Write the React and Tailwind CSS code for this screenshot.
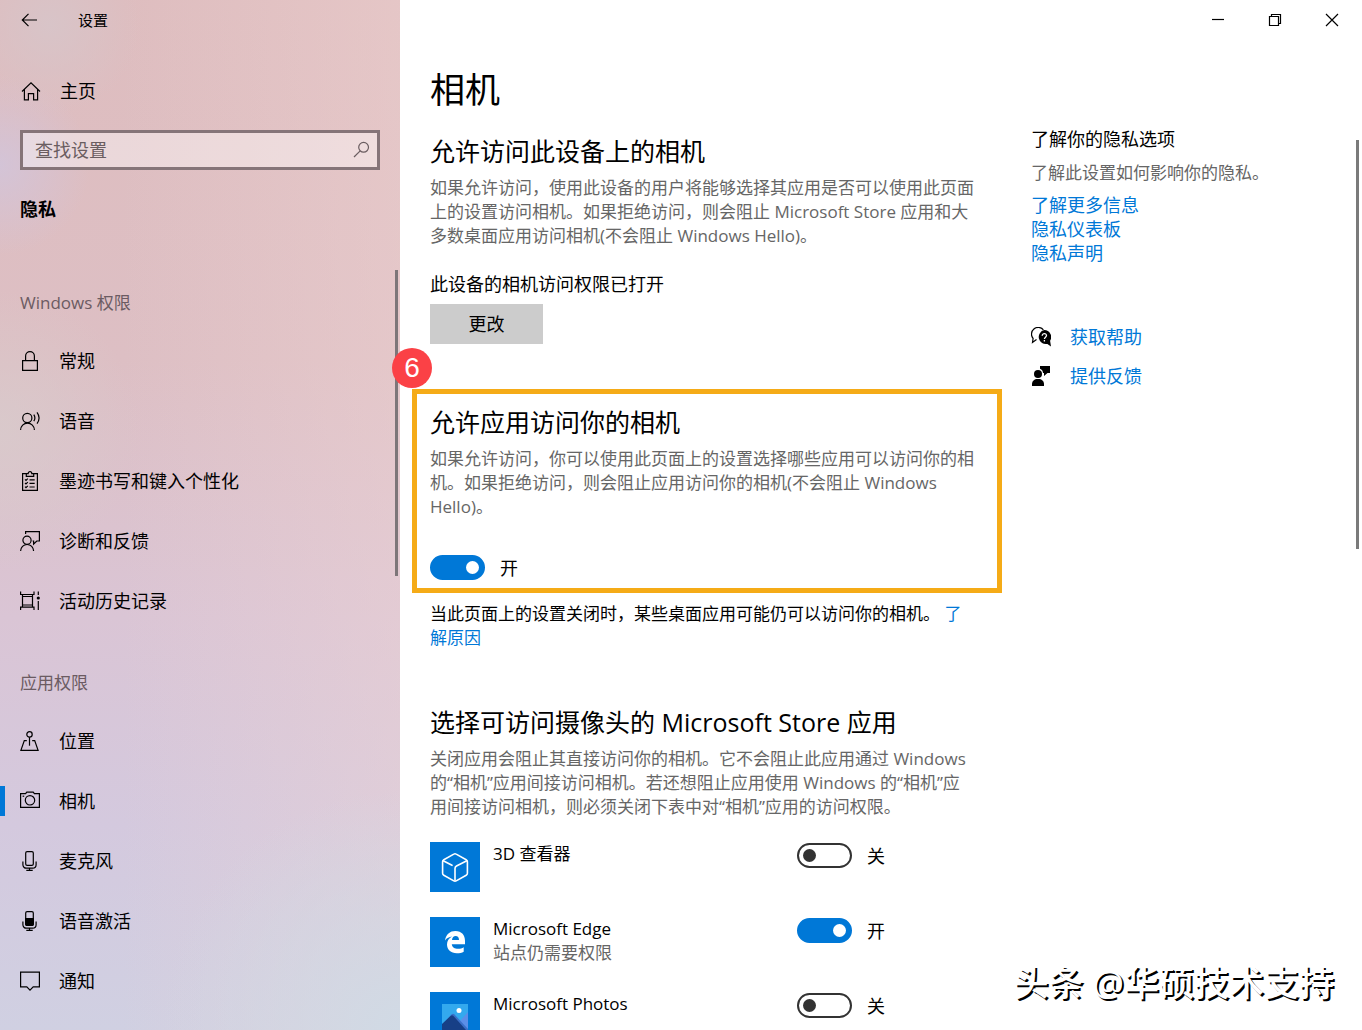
import React, { useState } from 'react';
import clsx from 'clsx';

const Icon = ({ children, className = 'h-5 w-5' }) => (
  <svg
    viewBox="0 0 20 20"
    className={clsx('shrink-0', className)}
    fill="none"
    stroke="currentColor"
    strokeWidth="1.2"
    aria-hidden="true"
  >
    {children}
  </svg>
);

const icons = {
  lock: (
    <>
      <path d="M2.6 9.6h14.8v9.8H2.6z" />
      <path d="M5.6 9.6V5a4.4 4.4 0 0 1 8.8 0v4.6" />
    </>
  ),
  speech: (
    <>
      <circle cx="7.3" cy="7" r="4.6" />
      <path d="M.6 19a6.9 6.9 0 0 1 13.8 0" />
      <path d="M13.8 3.6a6 6 0 0 1 0 6.6M17 1.4a9.4 9.4 0 0 1 0 11.2" />
    </>
  ),
  clipboard: (
    <>
      <path d="M6.3 2.6H2.6v16.8h14.8V2.6h-3.7" />
      <path d="M6.3 2.6h1.9C8.2 1.2 9 .6 10 .6s1.8.6 1.8 2h1.9v2.8H6.3z" />
      <path d="M5 8.4l1 1 1.8-1.8M5 12l1 1 1.8-1.8M5 15.6l1 1 1.8-1.8M9.5 8.8h5.2M9.5 12.4h5.2M9.5 16h5.2" />
    </>
  ),
  feedback: (
    <>
      <circle cx="7" cy="9.2" r="4.1" />
      <path d="M.6 20a6.5 6.5 0 0 1 13 0" />
      <path d="M5.6 3V.6h13.8V10h-2.6l-3.2 3v-3h-1" />
    </>
  ),
  history: (
    <>
      <path d="M2.5 3.5v12.500M12.500 3.500v12.500M.6.600v2.900h13.400V.600M.6 19v-2.900h13.400V19M2.500 5.500h10M2.500 14h10" />
      <path d="M18.300.600v3.400M18.300 10v9" />
      <circle cx="18.300" cy="7" r="1.600" fill="currentColor" stroke="none" />
    </>
  ),
  location: (
    <>
      <circle cx="9.5" cy="3.4" r="2.7" />
      <path d="M9.5 6.1v8.6" />
      <path d="M6.8 9.6H4.3L.9 19.4h17.2L14.7 9.6h-2.5" />
    </>
  ),
  camera: (
    <>
      <path d="M.6 2.6h5l1.2-1.5h6.4l1.2 1.5h5v13.8H.6z" />
      <circle cx="10" cy="9.3" r="4.7" />
      <path d="M2.6 5.2h1.6" />
    </>
  ),
  mic: (
    <>
      <rect x="5.7" y=".6" width="7.6" height="13.8" rx="1.4" />
      <path d="M2.9 10.5v3.3a3.4 3.4 0 0 0 3.4 3.4h6.4a3.4 3.4 0 0 0 3.4-3.4v-3.3M9.5 17.2v2.2M6.3 19.4h6.4" />
    </>
  ),
  micActive: (
    <>
      <rect x="5.7" y=".6" width="7.6" height="13.8" rx="1.4" />
      <path d="M5.7 7.5h7.6v5.7q0 1.2-1.2 1.2H6.9q-1.2 0-1.2-1.2z" fill="currentColor" />
      <path d="M2.9 10.5v3.3a3.4 3.4 0 0 0 3.4 3.4h6.4a3.4 3.4 0 0 0 3.4-3.4v-3.3M9.5 17.2v2.2M6.3 19.4h6.4" />
    </>
  ),
  notification: <path d="M.6 1.1h18.8v14.8h-6.2L10 19.1l-3.2-3.2H.6z" />,
};

const navGroups = [
  {
    title: 'Windows 权限',
    items: [
      { icon: 'lock', label: '常规' },
      { icon: 'speech', label: '语音' },
      { icon: 'clipboard', label: '墨迹书写和键入个性化' },
      { icon: 'feedback', label: '诊断和反馈' },
      { icon: 'history', label: '活动历史记录' },
    ],
  },
  {
    title: '应用权限',
    items: [
      { icon: 'location', label: '位置' },
      { icon: 'camera', label: '相机' },
      { icon: 'mic', label: '麦克风' },
      { icon: 'micActive', label: '语音激活' },
      { icon: 'notification', label: '通知' },
    ],
  },
];

const apps = [
  { id: 'viewer', name: '3D 查看器', enabled: false },
  { id: 'edge', name: 'Microsoft Edge', note: '站点仍需要权限', enabled: true },
  { id: 'photos', name: 'Microsoft Photos', enabled: false },
];

const AppLogo = ({ id }) => (
  <svg viewBox="0 0 50 50" className="h-[50px] w-[50px] shrink-0 bg-[#0078d7]" aria-hidden="true">
    {id === 'viewer' && (
      <g fill="none" stroke="#fff" strokeWidth="1.6" strokeLinejoin="round" strokeLinecap="round">
        <path d="M25 11.7q.6 0 1.2.4l10 5.6q1.2.7 1.2 2v11.6q0 1.3-1.2 2l-10 5.6q-1.2.6-2.4 0l-10-5.6q-1.2-.7-1.2-2V19.7q0-1.3 1.2-2l10-5.6q.6-.4 1.2-.4z" />
        <path d="M13.2 18.8L22 23.3M36.8 18.8L26.5 24Q25 24.8 25 26.5v12" />
      </g>
    )}
    {id === 'edge' && (
      <path
        fill="#fff"
        d="M15 23.4c1-6 4.8-9.4 10.4-9.4 6.4 0 9.6 4.4 9.6 9.8v3.4H21.8c.2 3.2 3 4.6 6.2 4.6 2.3 0 4.2-.6 5.7-1.6v4.500c-1.800 1-4.100 1.500-6.900 1.500-6 0-9.800-3.400-9.800-8.600 0-3.600 1.900-6.500 5-8-2.800.4-5.200 1.600-7 3.800zm7-.4h7c0-2.400-1.200-3.900-3.400-3.900-2 0-3.300 1.600-3.600 3.900z"
      />
    )}
    {id === 'photos' && (
      <>
        <path fill="#33a9ee" d="M12 12h26v26H12z" />
        <path fill="#5b8fe8" d="M38 20v18H22z" />
        <path fill="#3a6fc8" d="M12 33l9.5-10.5q1.5-1.5 3 0L38 37v1H12z" />
        <path fill="#173f86" d="M12 32l8.500-8q1.500-1.400 3 0L36 38H12z" />
        <circle cx="29" cy="18.5" r="2.5" fill="#fff" />
      </>
    )}
  </svg>
);

const Toggle = ({ id, label, defaultChecked }) => {
  const [checked, setChecked] = useState(defaultChecked);
  return (
    <div className="flex items-center gap-[15px]">
      <input
        id={id}
        type="checkbox"
        role="switch"
        aria-label={label}
        checked={checked}
        onChange={(e) => setChecked(e.target.checked)}
        className="flex h-[25px] w-[55px] shrink-0 appearance-none items-center rounded-full border-2 border-[#333] px-1 before:h-[13px] before:w-[13px] before:rounded-full before:bg-[#333] checked:justify-end checked:border-[#0078d7] checked:bg-[#0078d7] checked:before:bg-white"
      />
      <label htmlFor={id} className="text-[18px] leading-6">
        {checked ? '开' : '关'}
      </label>
    </div>
  );
};

const SectionTitle = ({ children }) => (
  <h2 className="text-[25px] leading-[34px]">{children}</h2>
);

const Description = ({ lines }) => (
  <p className="mt-2 whitespace-pre-line text-[17px] leading-6 text-[#666]">{lines.join('\n')}</p>
);

const Sidebar = () => (
  <aside className="relative flex w-[400px] shrink-0 flex-col bg-[radial-gradient(circle_at_0px_165px,#d0c6dfbb,transparent_90px),radial-gradient(circle_at_50px_25px,#d8c4c8,transparent_90px),radial-gradient(circle_at_0px_430px,#d8ccccbb,transparent_140px),radial-gradient(circle_at_100%_100%,#d0dae5,transparent_240px),linear-gradient(90deg,transparent_30%,#f0d4d266),linear-gradient(#debdbf,#ddbfc4_35%,#dac5d5_60%,#d4c9de_80%,#d0d0e2)]">
    <div className="flex h-10 items-center gap-[38px] pl-5">
      <button aria-label="返回">
        <Icon>
          <path d="M17 10H2.5M8.5 3.8L2.3 10l6.2 6.2" />
        </Icon>
      </button>
      <span className="text-[15px]">设置</span>
    </div>
    <a href="#home" className="mt-[31px] flex h-10 items-center gap-[19px] pl-[21px] text-[18px]">
      <Icon>
        <path d="M1 10.5l9-8.7 9 8.7M3.4 8.6v10.300h4v-6.300h5.200v6.300h4V8.600" />
      </Icon>
      主页
    </a>
    <div className="mx-5 mt-[19px] flex h-10 items-center border-[3px] border-[#857478] bg-white/40 pl-3 pr-1.5">
      <input
        type="text"
        aria-label="查找设置"
        placeholder="查找设置"
        className="min-w-0 flex-1 bg-transparent text-[18px] outline-none placeholder:text-[#6a5d60]"
      />
      <Icon className="h-5 w-5 text-[#6a5d60]">
        <circle cx="12.6" cy="7.3" r="4.9" />
        <path d="M9.2 10.8L3 17" />
      </Icon>
    </div>
    <h2 className="mt-[27px] pl-5 text-[18px] leading-6 font-bold">隐私</h2>
    <nav className="mt-[70px] flex flex-col gap-10">
      {navGroups.map((group) => (
        <div key={group.title}>
          <h3 className="mb-4 pl-5 text-[17px] leading-6 text-[#6b5b62]">{group.title}</h3>
          {group.items.map((item) => (
            <a
              key={item.label}
              href={`#${item.icon}`}
              className={clsx(
                'flex h-[60px] items-center gap-[19px] pl-5 text-[18px]',
                item.icon === 'camera' &&
                  'relative before:absolute before:left-0 before:h-[30px] before:w-[5px] before:bg-[#0078d7]'
              )}
            >
              <Icon>{icons[item.icon]}</Icon>
              {item.label}
            </a>
          ))}
        </div>
      ))}
    </nav>
    <div className="absolute top-[270px] right-0.5 h-[306px] w-[3px] bg-[#7d7679]" />
  </aside>
);

const WindowControls = () => (
  <div className="flex h-10 shrink-0 items-center justify-end gap-[37px] pr-5">
    <button aria-label="最小化">
      <Icon>
        <path d="M4 9.5h12" />
      </Icon>
    </button>
    <button aria-label="还原">
      <Icon>
        <path d="M4.5 6.5h9v9h-9zM6.500 6.500v-2h9v9h-2" />
      </Icon>
    </button>
    <button aria-label="关闭">
      <Icon>
        <path d="M4 4l12 12M16 4L4 16" />
      </Icon>
    </button>
  </div>
);

const PrivacyLinks = () => (
  <aside className="w-[300px] pt-[87px] text-[18px] leading-6">
    <h2>了解你的隐私选项</h2>
    <p className="mt-[10px] text-[17px] text-[#666]">了解此设置如何影响你的隐私。</p>
    <div className="mt-2 flex flex-col items-start text-[#0078d7]">
      <a href="#more">了解更多信息</a>
      <a href="#dashboard">隐私仪表板</a>
      <a href="#statement">隐私声明</a>
    </div>
    <div className="mt-[60px] flex flex-col items-start gap-[15px] text-[#0078d7]">
      <a href="#help" className="flex items-center gap-[19px]">
        <Icon className="h-5 w-5 text-black">
          <path d="M5.5 12.6L1.500 15.500l.6-4A6.500 6.500 0 1 1 12.400 2.800" />
          <path
            fill="currentColor"
            stroke="none"
            d="M13.300 3a7 7 0 0 1 5.800 10.700l.9 5.900-3.600-2.700A7 7 0 1 1 13.300 3z"
          />
          <path stroke="#fff" strokeWidth="1.3" d="M11.2 8.7c0-2.800 4.400-2.700 4.300-.1 0 1.600-2.100 1.700-2.100 3.500M13.400 13v1.500" />
        </Icon>
        获取帮助
      </a>
      <a href="#feedback" className="flex items-center gap-[19px]">
        <Icon className="h-5 w-5 text-black">
          <g fill="currentColor" stroke="none">
            <circle cx="7" cy="8" r="4" />
            <path d="M1 20v-2c0-3 2.500-5 5.500-5h1c3 0 5.500 2 5.500 5v2z" />
            <path d="M9 0h10v7h-2.500L13 10V7h-1c0-2-1-3.500-3-4.300z" />
          </g>
        </Icon>
        提供反馈
      </a>
    </div>
  </aside>
);

const App = () => (
  <div className="relative flex h-screen overflow-hidden bg-white font-['Open_Sans','Noto_Sans_CJK_SC',sans-serif] text-black">
    <Sidebar />
    <div className="flex min-w-0 flex-1 flex-col">
      <WindowControls />
      <div className="flex items-start gap-[29px] pl-3">
        <main className="w-[590px] shrink-0">
          <div className="px-[18px]">
            <h1 className="mt-[26px] text-[35px] leading-[48px]">相机</h1>
            <div className="mt-5">
              <SectionTitle>允许访问此设备上的相机</SectionTitle>
              <Description
                lines={[
                  '如果允许访问，使用此设备的用户将能够选择其应用是否可以使用此页面',
                  '上的设置访问相机。如果拒绝访问，则会阻止 Microsoft Store 应用和大',
                  '多数桌面应用访问相机(不会阻止 Windows Hello)。',
                ]}
              />
            </div>
            <p className="mt-6 text-[18px] leading-6">此设备的相机访问权限已打开</p>
            <button className="mt-2 h-10 w-[113px] bg-[#ccc] text-[18px]">更改</button>
          </div>

          {/* Highlighted step */}
          <section className="relative mt-[45px] border-[5px] border-[#f5ab17] px-[13px] pt-[11px] pb-2">
            <span className="absolute -top-[46px] -left-[25px] flex h-10 w-10 items-center justify-center rounded-full bg-[#fb4146] font-['Liberation_Sans',sans-serif] text-[28px] text-white">
              6
            </span>
            <SectionTitle>允许应用访问你的相机</SectionTitle>
            <Description
              lines={[
                '如果允许访问，你可以使用此页面上的设置选择哪些应用可以访问你的相',
                '机。如果拒绝访问，则会阻止应用访问你的相机(不会阻止 Windows',
                'Hello)。',
              ]}
            />
            <div className="mt-9">
              <Toggle id="camera-access" label="允许应用访问你的相机" defaultChecked />
            </div>
          </section>

          <div className="px-[18px]">
            <p className="mt-[9px] text-[17px] leading-6">
              当此页面上的设置关闭时，某些桌面应用可能仍可以访问你的相机。{' '}
              <a href="#why" className="text-[#0078d7]">
                了<br />
                解原因
              </a>
            </p>
            <div className="mt-[55px]">
              <SectionTitle>选择可访问摄像头的 Microsoft Store 应用</SectionTitle>
              <Description
                lines={[
                  '关闭应用会阻止其直接访问你的相机。它不会阻止此应用通过 Windows',
                  '的“相机”应用间接访问相机。若还想阻止应用使用 Windows 的“相机”应',
                  '用间接访问相机，则必须关闭下表中对“相机”应用的访问权限。',
                ]}
              />
            </div>
            <ul className="mt-[23px] flex flex-col gap-[25px]">
              {apps.map((app) => (
                <li key={app.id} className="flex h-[50px] items-start">
                  <AppLogo id={app.id} />
                  <div className="w-[317px] pl-[13px] text-[17px] leading-6">
                    <p>{app.name}</p>
                    {app.note && <p className="text-[#666]">{app.note}</p>}
                  </div>
                  <div className="pt-px">
                    <Toggle id={app.id} label={app.name} defaultChecked={app.enabled} />
                  </div>
                </li>
              ))}
            </ul>
          </div>
        </main>
        <PrivacyLinks />
      </div>
    </div>

    <div className="absolute top-[140px] right-[3px] h-[409px] w-[3px] bg-[#7a7a7a]" />
    <p className="absolute right-7 bottom-[22px] text-[35px] leading-[50px] font-medium text-white [text-shadow:2px_2px_0_#000]">
      头条 @华硕技术支持
    </p>
  </div>
);

export default App;
